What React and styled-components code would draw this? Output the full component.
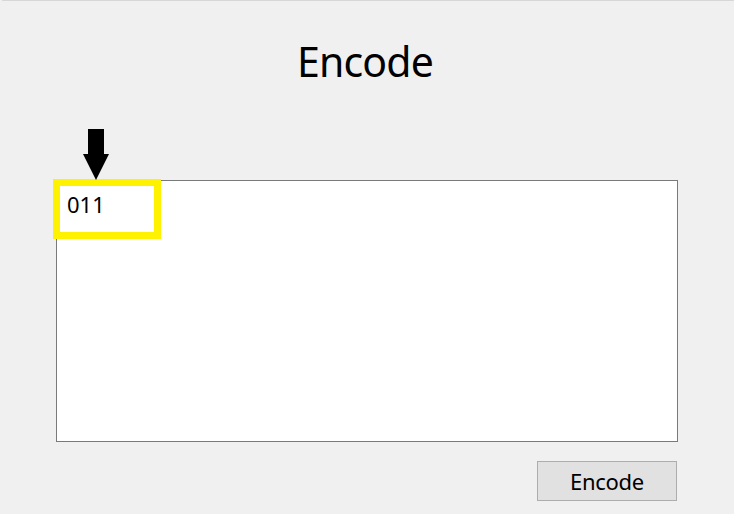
import React from "react";
import styled, { createGlobalStyle } from "styled-components";

const Global = createGlobalStyle`
  html, body { margin: 0; padding: 0; background: #f0f0f0; }
  body { font-family: "Noto Sans", "Open Sans", sans-serif; }
`;

const Window = styled.div`
  margin-left: 2px;
  border-top: 1px solid #d7d7d7;
  height: 513px;
  display: flex;
  flex-direction: column;
  box-sizing: border-box;
`;

const Title = styled.h1`
  margin: 0;
  padding-top: 34px;
  text-align: center;
  font-size: 41px;
  font-weight: 400;
  letter-spacing: -0.8px;
  line-height: 52px;
  color: #000;
  margin-right: 6px;
`;

const Editor = styled.div`
  position: relative;
  margin: 93px 56px 0 54px;
  height: 262px;
  border: 1px solid #7a7a7a;
  background: #ffffff;
  box-sizing: border-box;
`;

const Content = styled.div`
  padding: 8px 0 0 10px;
  font-size: 22px;
  line-height: 30px;
  color: #000;
`;

const Highlight = styled.div`
  position: absolute;
  left: -4px;
  top: -2px;
  width: 108px;
  height: 60px;
  border: 7px solid #fff200;
  box-sizing: border-box;
  pointer-events: none;
`;

const Arrow = styled.svg`
  position: absolute;
  left: 25px;
  top: -52px;
`;

const Actions = styled.div`
  display: flex;
  justify-content: flex-end;
  margin: 19px 57px 0 0;
`;

const Button = styled.button`
  width: 140px;
  height: 40px;
  background: #e1e1e1;
  border: 1px solid #adadad;
  font-family: "Noto Sans", "Open Sans", sans-serif;
  font-size: 22px;
  color: #000;
  padding: 0;
  letter-spacing: -0.3px;
`;

export default function App() {
  return (
    <>
      <Global />
      <Window>
        <Title>Encode</Title>
        <Editor>
          <Content>011</Content>
          <Highlight />
          <Arrow width="28" height="52" viewBox="0 0 28 52">
            <path d="M6 0 H22 V25 H27 L14 51 L1 25 H6 Z" fill="#000" />
          </Arrow>
        </Editor>
        <Actions>
          <Button>Encode</Button>
        </Actions>
      </Window>
    </>
  );
}
